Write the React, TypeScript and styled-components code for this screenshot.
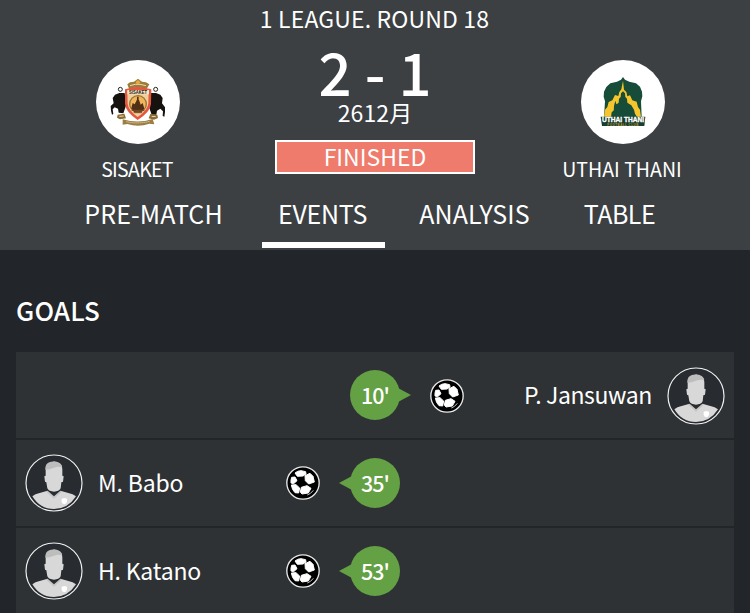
import styled, { createGlobalStyle } from 'styled-components';

type Side = 'home' | 'away';

interface Goal {
  minute: string;
  player: string;
  side: Side;
  spacing: number;
}

const GOALS: Goal[] = [
  { minute: "10'", player: 'P. Jansuwan', side: 'away', spacing: -0.4 },
  { minute: "35'", player: 'M. Babo', side: 'home', spacing: -0.15 },
  { minute: "53'", player: 'H. Katano', side: 'home', spacing: -0.2 },
];

const TABS = [
  { label: 'PRE-MATCH', width: 215, spacing: 0.1 },
  { label: 'EVENTS', width: 123, spacing: -0.25 },
  { label: 'ANALYSIS', width: 181, spacing: 0.05 },
  { label: 'TABLE', width: 109, spacing: -0.5 },
];

const SisaketCrest = () => (
  <svg viewBox='18 15 252 252'>
    <path d='M112 88l8-6 12-2 12-9 12 9 12 2 10 6-8 14-18-4h-18l-16 6z' fill='#9c7c3c' />
    <path d='M120 92l16-4h14l18 4' stroke='#e9d9ae' strokeWidth='3' fill='none' />
    <circle cx='144' cy='82' r='6' fill='#e8a93c' />
    {/* elephants */}
    <path
      d='M104 114l-16 0-13 5-7 10 3 16-9 8 1 14 3 12 4-2-2-14 6-6 10 4 2 12 14 2 9-26z'
      fill='#15120f'
    />
    <path
      d='M182 114l16 0 13 5 7 10-2 16 9 12 0 14-2 14-5-2 1-14-8-8-10 6-2 12-14 0-9-26z'
      fill='#15120f'
    />
    <circle cx='91' cy='103' r='6' fill='#fff' stroke='#26221f' strokeWidth='3' />
    <circle cx='197' cy='103' r='6' fill='#fff' stroke='#26221f' strokeWidth='3' />
    <path d='M105 103l16-4 22-4 24 4 17 4-1 44q-2 24-40 48q-36-24-38-48z' fill='#e3573f' />
    <path d='M112 107h64l-1 39q-3 20-32 40q-28-20-30-40z' fill='#f0cf9d' />
    <path d='M112 105h65v13h-65z' fill='#f7e6c6' />
    <circle cx='144' cy='147' r='27' fill='#9b7133' />
    <circle cx='144' cy='147' r='23' fill='#f1b65c' />
    <path
      d='M124 160l4-16 6 4 5-10 4-9 5 8 4 12 6-5 5 17-9 9h-22zM141 125h5v16h-5z'
      fill='#4f2f16'
    />
    <path d='M125 166h38M131 173h25' stroke='#7b4b20' strokeWidth='3' />
    <text
      x='117'
      y='117'
      textLength='54'
      lengthAdjust='spacingAndGlyphs'
      fontFamily='Liberation Sans'
      fontWeight='700'
      fontSize='14'
      fill='#25170f'
    >
      SISAKET
    </text>
    <path d='M83 179l20-3 5 14-18 3-9-5zM181 177l21 2 2 10-12 5-16-4z' fill='#8b6b31' />
    <path d='M88 184l13-1M185 184l12 1' stroke='#e9dcb9' strokeWidth='3' />
    <path d='M98 193q46 14 90-1l5 16-15-2q-32 12-66 1l-14 2z' fill='#9c7d43' />
    <path d='M109 200q34 8 70-1' stroke='#e2cf9f' strokeWidth='3' fill='none' strokeDasharray='4 2' />
  </svg>
);

const UthaiCrest = () => (
  <svg viewBox='18 15 252 252'>
    <path
      d='M144 66l6 8 13 6 20 5 12 10 6 15 1 14-4 15 2 47H87l3-47-4-14 1-15 7-14 12-11 20-5 12-6z'
      fill='#174c38'
    />
    <path
      d='M144 77l3 27 7 7 3 13 8-3 7 15 13 4 4 16 6 8 3 22H87l3-22 7-8 4-15 11-5 8-16 10 3 3-12 6-8z'
      fill='#f4c52d'
    />
    <path
      d='M144 109l6 6 1 11 5 5 1 12 12 8 8 13 3 12 6 10h-78l2-14 8-7 4-15 9-7 1-12 5-5 1-11z'
      fill='#174c38'
    />
    <path d='M121 137l3 10 5 4-4 22h-9l1-20z' fill='#174c38' />
    <path d='M77 185h134l-3 28H81z' fill='#173d2d' />
    <text
      x='81'
      y='202'
      textLength='126'
      lengthAdjust='spacingAndGlyphs'
      fontFamily='Liberation Sans'
      fontWeight='700'
      fontSize='21'
      fill='#fff'
      stroke='#fff'
    >
      UTHAI THANI
    </text>
    <text
      x='97'
      y='212'
      textLength='93'
      fontFamily='Liberation Sans'
      fontWeight='700'
      fontSize='9'
      fill='#b79a35'
    >
      FOOTBALL CLUB
    </text>
  </svg>
);

const Ball = () => (
  <svg viewBox='0 0 102 102' width='34' height='34'>
    <circle cx='51' cy='51' r='48.5' fill='#000' stroke='#e9eaea' strokeWidth='4' />
    <g fill='#fff' stroke='#fff' strokeWidth='3' strokeLinejoin='round'>
      <path d='M27 21q8-7 18-7l14 3 1 7-9 6-17 1z' />
      <path d='M57 29l15-7 9 9 4 17-17 6-10-10z' />
      <path d='M17 34l10-1 6 11-10 9-8-2q-1-8 2-17z' />
      <path d='M16 57l14-1 11 10-3 15-11-1q-9-8-11-23z' />
      <path d='M46 64l17-5 12 8-8 14-19 3-5-6z' />
    </g>
    <path d='M64 87q10-3 18-14' stroke='#ccc' strokeWidth='3' fill='none' />
  </svg>
);

const Player = () => (
  <svg viewBox='0 0 174 174' width='58' height='58'>
    <circle cx='87' cy='87' r='84' fill='#282c30' stroke='#f1f1f1' strokeWidth='3.5' />
    <path
      d='M22 127q8-7 22-10l21-6 22 20 22-20 21 6q14 3 23 10-24 38-66 38t-65-38z'
      fill='#d8d8d8'
    />
    <path d='M62 112l6-2 19 17 19-17 6 2-25 22z' fill='#c4c4c4' />
    <path
      d='M62 45q0-20 25-22 25 2 25 22v20l4 2-2 16-5 2-2 18q-5 10-20 10t-20-10l-3-18-4-2-2-16 4-2z'
      fill='#d8d8d8'
    />
    <path d='M61 47q-1-19 14-23l13-2q22 3 24 18-11-4-25 1-14 6-26 6z' fill='#bdbdbd' />
    <path d='M110 134l8-2 8 2v9q-2 6-8 8-7-2-8-8z' fill='#fff' />
  </svg>
);

export default function App() {
  return (
    <Page>
      <GlobalStyle />
      <Header>
        <League>1 LEAGUE. ROUND 18</League>
        <Scoreboard>
          <Team>
            <Crest>
              <SisaketCrest />
            </Crest>
            <TeamName $spacing={-0.7}>SISAKET</TeamName>
          </Team>
          <Result>
            <Score>2 - 1</Score>
            <MatchDate>2612月</MatchDate>
            <Status>FINISHED</Status>
          </Result>
          <Team $away>
            <Crest>
              <UthaiCrest />
            </Crest>
            <TeamName $spacing={0}>UTHAI THANI</TeamName>
          </Team>
        </Scoreboard>
        <Tabs>
          {TABS.map(({ label, width, spacing }) => (
            <Tab key={label} $width={width} $spacing={spacing} $active={label === 'EVENTS'}>
              {label}
            </Tab>
          ))}
        </Tabs>
      </Header>
      <Content>
        <h2>GOALS</h2>
        <GoalList>
          {GOALS.map(({ minute, player, side, spacing }) => (
            <GoalRow key={minute} $side={side}>
              <Player />
              <PlayerName $spacing={spacing}>{player}</PlayerName>
              <Ball />
              <Minute $side={side}>{minute}</Minute>
            </GoalRow>
          ))}
        </GoalList>
      </Content>
    </Page>
  );
}

const GlobalStyle = createGlobalStyle`
  * {
    box-sizing: border-box;
  }

  body {
    margin: 0;
    background: #222529;
    overflow: hidden;
  }
`;

const Page = styled.div`
  width: 750px;
  height: 613px;
  overflow: hidden;
  color: #fff;
  font-family: 'Noto Sans CJK SC', 'Noto Sans', sans-serif;
  background: #222529;

  svg {
    display: block;
    flex-shrink: 0;
  }
`;

const Header = styled.header`
  height: 250px;
  background: #3c4043;
`;

const League = styled.div`
  height: 40px;
  padding-right: 1px;
  line-height: 37px;
  font-size: 23px;
  letter-spacing: 0.15px;
  text-align: center;
`;

const Scoreboard = styled.div`
  display: grid;
  grid-template-columns: 275px 200px 275px;
  height: 146px;
`;

const Team = styled.div<{ $away?: boolean }>`
  display: flex;
  flex-direction: column;
  align-items: center;
  padding-top: 20px;
  padding-left: ${({ $away }) => ($away ? '21px' : '1px')};
`;

const Crest = styled.div`
  width: 84px;
  height: 84px;
  border-radius: 50%;
  background: #fff;
  overflow: hidden;
`;

const TeamName = styled.div<{ $spacing: number }>`
  margin-top: 10px;
  padding-right: 2px;
  line-height: 30px;
  font-size: 19.5px;
  white-space: nowrap;
  letter-spacing: ${({ $spacing }) => $spacing}px;
`;

const Result = styled.div`
  display: flex;
  flex-direction: column;
  text-align: center;
`;

const Score = styled.div`
  height: 60px;
  line-height: 63px;
  font-size: 58px;
  font-weight: 500;
  white-space: nowrap;
`;

const MatchDate = styled.div`
  height: 40px;
  line-height: 25px;
  font-size: 23px;
  letter-spacing: 0.1px;
`;

const Status = styled.div`
  height: 34px;
  line-height: 28px;
  border: 2px solid #fff;
  background: #ee7b6c;
  font-size: 23px;
`;

const Tabs = styled.nav`
  display: flex;
  height: 62px;
  padding-left: 47px;
`;

const Tab = styled.div<{ $width: number; $spacing: number; $active: boolean }>`
  width: ${({ $width }) => $width}px;
  height: 62px;
  padding-right: 2px;
  line-height: 54px;
  font-size: 25px;
  letter-spacing: ${({ $spacing }) => $spacing}px;
  text-align: center;
  border-bottom: 6px solid ${({ $active }) => ($active ? '#fff' : 'transparent')};
`;

const Content = styled.main`
  padding: 42px 16px 0;

  h2 {
    margin: 0 0 20px;
    height: 40px;
    line-height: 36px;
    font-size: 26px;
    font-weight: 500;
    letter-spacing: 0.15px;
  }
`;

const GoalList = styled.div`
  display: flex;
  flex-direction: column;
  gap: 2px;
`;

const GoalRow = styled.div<{ $side: Side }>`
  display: flex;
  flex-direction: ${({ $side }) => ($side === 'home' ? 'row' : 'row-reverse')};
  align-items: center;
  height: 86px;
  padding: 0 9px;
  background: #2e3235;
  text-align: ${({ $side }) => ($side === 'home' ? 'left' : 'right')};

  svg {
    margin-top: ${({ $side }) => ($side === 'home' ? 0 : 2)}px;
  }
`;

const PlayerName = styled.div<{ $spacing: number }>`
  width: 203px;
  padding: 0 15px 2px;
  font-size: 23px;
  line-height: 38px;
  white-space: nowrap;
  letter-spacing: ${({ $spacing }) => $spacing}px;
`;

const Minute = styled.div<{ $side: Side }>`
  position: relative;
  width: 50px;
  height: 50px;
  margin: ${({ $side }) => ($side === 'home' ? '0 0 0 30px' : '0 30px 0 0')};
  border-radius: 50%;
  background: #64a044;
  line-height: 49px;
  font-size: 21.5px;
  font-weight: 500;
  letter-spacing: -0.9px;
  text-align: center;

  &::after {
    content: '';
    position: absolute;
    top: 18px;
    ${({ $side }) => ($side === 'home' ? 'left' : 'right')}: -11px;
    border: 7px solid transparent;
    border-${({ $side }) => ($side === 'home' ? 'right' : 'left')}: 13px solid #64a044;
    ${({ $side }) => ($side === 'home' ? 'border-left' : 'border-right')}: 0;
  }
`;
